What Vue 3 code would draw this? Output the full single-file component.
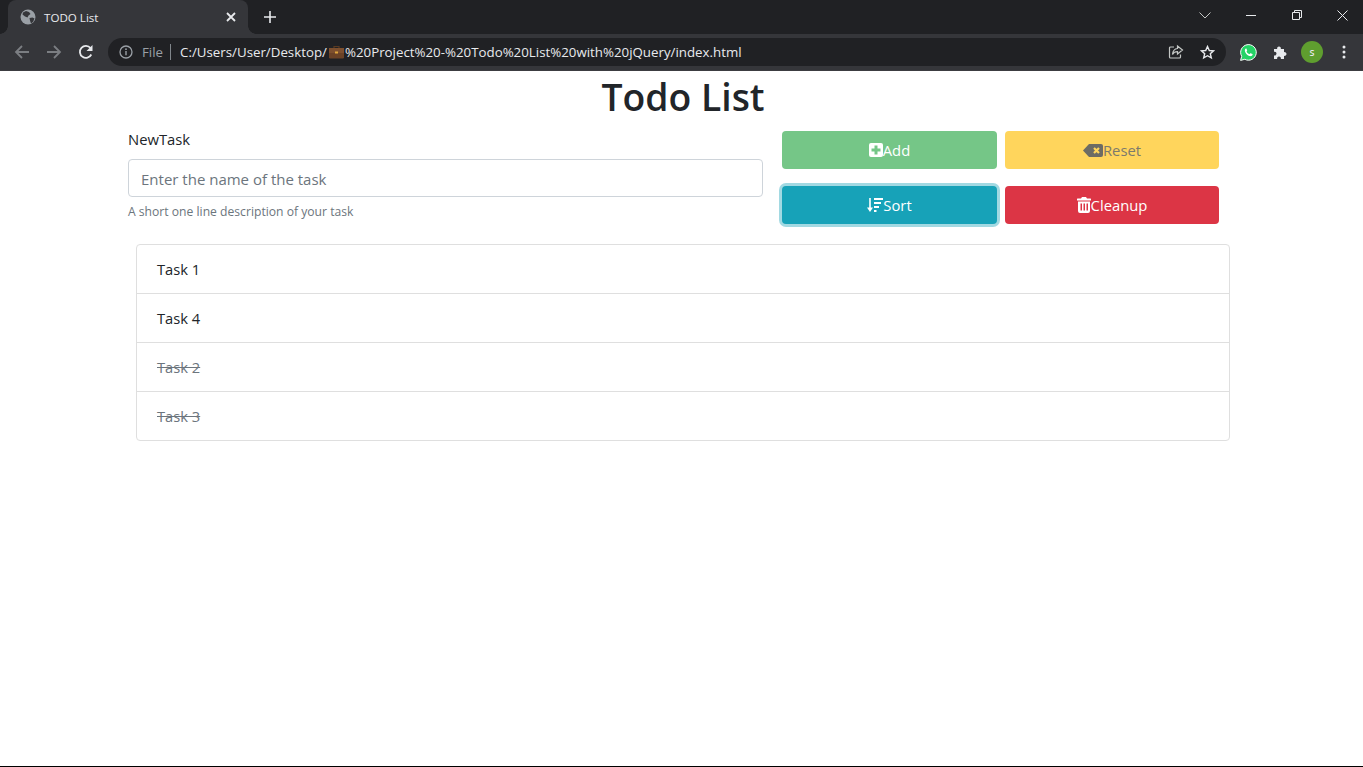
<template>
  <div class="window">
    <div class="tabstrip">
      <div class="tab">
        <svg class="globe" width="16" height="16" viewBox="0 0 16 16"><circle cx="8" cy="8" r="7.5" fill="#9aa0a6"/><path d="M3 3.500l3-1.500 3 1 1.500 2-2 1.500-1 2-2.500-1-2.500-2zM9.500 9l3-.5 2 1-1.500 3.500-2 1.500-1-3z" fill="#35363a"/></svg>
        <span class="tab-title">TODO List</span>
        <svg class="tab-close" width="10" height="10" viewBox="0 0 10 10"><path d="M1 1l8 8M9 1L1 9" stroke="#e8eaed" stroke-width="1.800"/></svg>
      </div>
      <svg class="newtab" width="12" height="12" viewBox="0 0 12 12"><path d="M6 0v12M0 6h12" stroke="#e8eaed" stroke-width="1.600"/></svg>
      <div class="winctl">
        <svg class="ctl-chevron" width="12" height="7" viewBox="0 0 12 7"><path d="M.5.5L6 6l5.500-5.500" fill="none" stroke="#c4c7c5"/></svg>
        <svg class="ctl-min" width="10" height="1" viewBox="0 0 10 1"><path d="M0 .5h10" stroke="#e8eaed"/></svg>
        <svg class="ctl-max" width="10" height="10" viewBox="0 0 10 10"><path d="M.5 2.500h7v7h-7zM2.500 2.500v-2h7v7h-2" fill="none" stroke="#e8eaed"/></svg>
        <svg class="ctl-close" width="11" height="11" viewBox="0 0 11 11"><path d="M.5.5l10 10M10.500.5l-10 10" stroke="#e8eaed"/></svg>
      </div>
    </div>
    <div class="toolbar">
      <svg class="nav" width="16" height="16" viewBox="0 0 16 16"><path d="M15 8H2M8 2L2 8l6 6" fill="none" stroke="#7b7e82" stroke-width="1.800"/></svg>
      <svg class="nav" width="16" height="16" viewBox="0 0 16 16"><path d="M1 8h13M8 2l6 6-6 6" fill="none" stroke="#7b7e82" stroke-width="1.800"/></svg>
      <svg class="nav" width="16" height="16" viewBox="0 0 16 16"><path d="M13.300 10.500A6 6 0 1 1 12.500 4" fill="none" stroke="#e8eaed" stroke-width="1.800"/><path d="M14.500 1v6h-6z" fill="#e8eaed"/></svg>
      <div class="omnibox">
        <svg width="14" height="14" viewBox="0 0 14 14"><circle cx="7" cy="7" r="6" fill="none" stroke="#9aa0a6" stroke-width="1.300"/><path d="M7 6v4.200" stroke="#9aa0a6" stroke-width="1.400"/><circle cx="7" cy="4.200" r=".9" fill="#9aa0a6"/></svg>
        <span class="scheme">File</span>
        <span class="divider"></span>
        <span class="url">C:/Users/User/Desktop/</span>
        <svg class="case" width="15" height="14" viewBox="0 0 15 14"><path d="M5 3V1.500h5V3" fill="none" stroke="#5a3a22" stroke-width="1.200"/><rect y="3" width="15" height="10.500" rx="1.200" fill="#6b4226"/><rect y="3" width="15" height="5" fill="#7d4f2e"/><rect x="6" y="6.500" width="3" height="2" fill="#e0a63c"/></svg>
        <span class="url">%20Project%20-%20Todo%20List%20with%20jQuery/index.html</span>
        <svg class="omni-share" width="16" height="16" viewBox="0 0 16 16"><path d="M6 3H2.500A1 1 0 0 0 1.500 4v9a1 1 0 0 0 1 1h9a1 1 0 0 0 1-1v-2.500" fill="none" stroke="#c4c7c5" stroke-width="1.200"/><path d="M9.500 2l5 4-5 4V7.700C7 7.700 5.500 8.500 4.500 10.500 4.800 7 6.500 4.800 9.500 4.500z" fill="none" stroke="#c4c7c5" stroke-width="1.200"/></svg>
        <svg class="omni-star" width="15" height="15" viewBox="0 0 15 15"><path d="M7.500 1.500l1.800 4 4.200.4-3.200 2.800 1 4.200-3.800-2.200-3.800 2.200 1-4.200L1.500 5.900l4.200-.4z" fill="none" stroke="#e8eaed" stroke-width="1.400"/></svg>
      </div>
      <svg class="tool-wa" width="17" height="17" viewBox="0 0 17 17"><path d="M.6 16.400l1.100-4.100A7.800 7.800 0 1 1 4.800 15.300z" fill="#25d366" stroke="#fff" stroke-width="1"/><path d="M6 4.500c-.7.300-1.300 1.200-1.100 2.400.3 2 2.800 4.800 5.200 5.200 1.200.2 2.300-.5 2.500-1.300.1-.4 0-.7-.2-.8l-1.700-.8c-.3-.1-.5 0-.7.300l-.5.700c-1.200-.4-2.400-1.400-3-2.700l.5-.6c.2-.2.200-.4.100-.6l-.7-1.700c-.1-.2-.2-.2-.4-.1z" fill="#fff"/></svg>
      <svg class="tool-puzzle" width="15" height="15" viewBox="0 0 15 15"><path d="M1 4h3.200a1.900 1.900 0 1 1 3.600 0H11v3.200a1.900 1.900 0 1 1 0 3.600V14H7.800a1.900 1.900 0 1 0-3.600 0H1v-3.600a1.900 1.900 0 1 0 0-3.600z" fill="#e8eaed"/></svg>
      <div class="avatar">S</div>
      <svg class="tool-dots" width="4" height="14" viewBox="0 0 4 14"><circle cx="2" cy="2" r="1.500" fill="#e8eaed"/><circle cx="2" cy="7" r="1.500" fill="#e8eaed"/><circle cx="2" cy="12" r="1.500" fill="#e8eaed"/></svg>
    </div>

    <main class="page">
      <h1 class="title">Todo List</h1>
      <form class="task-form" @submit.prevent>
        <div class="field">
          <label for="task">NewTask</label>
          <input id="task" v-model="name" type="text" placeholder="Enter the name of the task" />
          <small>A short one line description of your task</small>
        </div>
        <div class="actions">
          <button type="button" class="btn add">
            <svg width="14" height="14" viewBox="0 0 14 14" fill="currentColor"><path fill-rule="evenodd" d="M2 0h10a2 2 0 0 1 2 2v10a2 2 0 0 1-2 2H2a2 2 0 0 1-2-2V2a2 2 0 0 1 2-2zm3.500 2.500v3h-3v3h3v3h3v-3h3v-3h-3v-3z"/></svg>Add
          </button>
          <button type="button" class="btn reset">
            <svg width="20" height="13" viewBox="0 0 20 13"><path d="M6 0h12a2 2 0 0 1 2 2v9a2 2 0 0 1-2 2H6L0 6.500z" fill="#6d6c64"/><path d="M11 4l5 5M16 4l-5 5" stroke="#ffd55c" stroke-width="2.200"/></svg>Reset
          </button>
          <button type="button" class="btn sort">
            <svg width="16" height="14" viewBox="0 0 16 14" fill="currentColor"><path d="M2.200 0h1.600v9.500H6L3 14 0 9.500h2.200z"/><rect x="7" y="0" width="9" height="2"/><rect x="7" y="4" width="7" height="2"/><rect x="7" y="8" width="5" height="2"/><rect x="7" y="12" width="2.500" height="2"/></svg>Sort
          </button>
          <button type="button" class="btn cleanup">
            <svg width="14" height="16" viewBox="0 0 14 16" fill="currentColor"><path fill-rule="evenodd" d="M5 0h4l1 1.500h3.500a.5.500 0 0 1 .5.500v1.500H0V2a.5.500 0 0 1 .5-.5H4zM1 4.500h12V14a2 2 0 0 1-2 2H3a2 2 0 0 1-2-2zm2.500 2v7h1.500v-7zm3 0v7H8v-7zm3 0v7H11v-7z"/></svg>Cleanup
          </button>
        </div>
      </form>
      <ul class="tasks">
        <li v-for="t in tasks" :key="t.name" :class="{ done: t.done }">{{ t.name }}</li>
      </ul>
    </main>
    <div class="edge"></div>
  </div>
</template>

<script setup>
import { ref } from 'vue'

const name = ref('')
const tasks = ref([
  { name: 'Task 1', done: false },
  { name: 'Task 4', done: false },
  { name: 'Task 2', done: true },
  { name: 'Task 3', done: true },
])
</script>

<style>
html, body { margin: 0; background: #fff; overflow: hidden; }
</style>

<style scoped>
.window {
  height: 767px;
  display: flex;
  flex-direction: column;
  font-family: "Open Sans", "Noto Sans", sans-serif;
  color: #212529;
  overflow: hidden;
}
.tabstrip {
  height: 34px;
  background: #202124;
  display: flex;
  align-items: flex-start;
  padding-left: 8px;
  position: relative;
}
.tab {
  width: 240px;
  height: 34px;
  box-sizing: border-box;
  background: #35363a;
  border-radius: 8px 8px 0 0;
  display: flex;
  align-items: center;
  padding: 0 12px;
  position: relative;
}
.tab::before, .tab::after {
  content: "";
  position: absolute;
  bottom: 0;
  width: 8px;
  height: 8px;
  background: radial-gradient(circle at 0 0, transparent 7.5px, #35363a 8px);
}
.tab::before { left: -8px; }
.tab::after { right: -8px; background: radial-gradient(circle at 100% 0, transparent 7.5px, #35363a 8px); }
.tab-title {
  font-size: 11.6px;
  color: #e8eaed;
  margin-left: 8px;
  flex: 1;
}
.newtab { margin: 11px 0 0 16px; }
.winctl {
  margin-left: auto;
  display: flex;
  align-items: center;
  height: 30px;
}
.ctl-chevron { margin-right: 35px; }
.ctl-min { margin-right: 36px; }
.ctl-max { margin-right: 35px; }
.ctl-close { margin-right: 15px; }
.toolbar {
  height: 36px;
  background: #35363a;
  display: flex;
  align-items: center;
  padding-left: 14px;
  border-bottom: 1px solid #3c3d41;
}
.nav { margin-right: 16px; }
.omnibox {
  width: 1118px;
  height: 28px;
  box-sizing: border-box;
  margin-left: -2px;
  padding: 0 11px 0 11px;
  background: #202124;
  border-radius: 14px;
  display: flex;
  align-items: center;
  font-size: 13.3px;
}
.scheme { color: #9aa0a6; margin-left: 9px; }
.divider { width: 1px; height: 16px; background: #80868b; margin: 0 9px 0 7px; }
.url { color: #e8eaed; }
.case { margin: 0 1px 0 2px; }
.omni-share { margin-left: auto; }
.omni-star { margin-left: 16px; }
.tool-wa { margin-left: 14px; }
.tool-puzzle { margin-left: 16px; }
.avatar {
  width: 22px;
  height: 22px;
  margin-left: 13px;
  border-radius: 50%;
  background: #5f9e2f;
  color: #e8eaed;
  font-size: 9px;
  font-weight: 600;
  display: flex;
  align-items: center;
  justify-content: center;
}
.tool-dots { margin-left: 19px; }

.page { flex: 1; }
.title {
  margin: 0;
  padding-left: 3px;
  text-align: center;
  font-size: 37.3px;
  font-weight: 600;
  line-height: 52px;
  height: 60px;
}
.task-form {
  display: flex;
  margin-left: 128px;
  width: 1091px;
}
.field {
  width: 635px;
  display: flex;
  flex-direction: column;
}
.field label {
  font-size: 14.8px;
  line-height: 16px;
  margin: 0 0 12px;
}
.field input {
  height: 38px;
  box-sizing: border-box;
  border: 1px solid #ced4da;
  border-radius: 4px;
  padding: 2px 12px 0;
  font: inherit;
  font-size: 15px;
  color: #212529;
  outline: none;
}
.field input::placeholder { color: #6c757d; opacity: 1; }
.field small {
  margin-top: 6px;
  font-size: 12.15px;
  line-height: 18px;
  color: #6c757d;
}
.actions {
  margin-left: 19px;
  flex: 1;
  display: grid;
  grid-template-columns: 215px 214px;
  grid-auto-rows: 38px;
  column-gap: 8px;
  row-gap: 17px;
}
.btn {
  border: 0;
  border-radius: 4px;
  font: inherit;
  font-size: 14.8px;
  display: flex;
  align-items: center;
  justify-content: center;
  color: #fff;
  padding: 0;
}
.add { background: #75c687; }
.reset { background: #ffd55c; color: #7c7a6c; }
.sort { background: #17a2b8; box-shadow: 0 0 0 3px #a2d9e2; }
.cleanup { background: #dc3545; }
.tasks {
  list-style: none;
  margin: 20px 0 0 136px;
  padding: 0;
  width: 1094px;
  box-sizing: border-box;
  border: 1px solid #dfdfdf;
  border-radius: 4px;
}
.tasks li {
  height: 48px;
  padding: 0 20px;
  display: flex;
  align-items: center;
  font-size: 14.7px;
  color: #212529;
  border-top: 1px solid #dfdfdf;
}
.tasks li:first-child { border-top: 0; }
.tasks li.done { color: #6c757d; text-decoration: line-through; }
.edge { height: 1px; background: #000; }
</style>
